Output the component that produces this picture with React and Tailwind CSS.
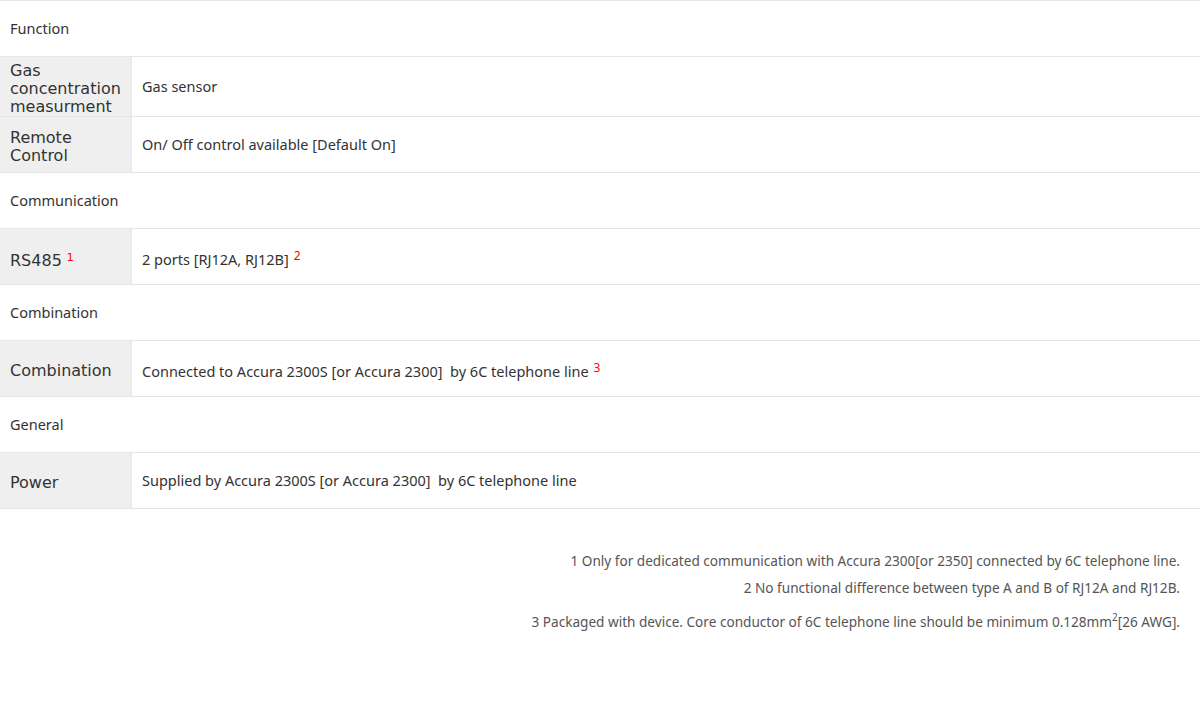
const rows = [
  { section: "Function" },
  { label: "Gas concentration measurment", value: "Gas sensor", h: "h-[60px]" },
  { label: "Remote Control", value: "On/ Off control available [Default On]" },
  { section: "Communication" },
  { label: "RS485", labelNote: "1", value: "2 ports [RJ12A, RJ12B]", note: "2" },
  { section: "Combination" },
  {
    label: "Combination",
    value: "Connected to Accura 2300S [or Accura 2300]  by 6C telephone line",
    note: "3",
  },
  { section: "General" },
  { label: "Power", value: "Supplied by Accura 2300S [or Accura 2300]  by 6C telephone line" },
];

const App = () => {
  return (
    <div className="w-[1200px] h-[705px] bg-white text-[#333]">
      <div className="border-t border-[#e6e6e6]">
        {rows.map((row, i) =>
          row.section ? (
            <div
              key={i}
              className="h-[56px] flex items-center px-[10px] border-b border-[#e6e6e6] text-[14.5px] font-['Noto_Sans',sans-serif]"
            >
              {row.section}
            </div>
          ) : (
            <div key={i} className={`flex border-b border-[#e6e6e6] ${row.h || "h-[56px]"}`}>
              <div
                className={`w-[132px] shrink-0 bg-[#efefef] border-r border-[#e6e6e6] flex items-center px-[10px] text-[16px] leading-[18px] font-['DejaVu_Sans',sans-serif] ${
                  row.labelNote ? "pt-[10px]" : "pt-[4px]"
                }`}
              >
                <span>
                  {row.label}
                  {row.labelNote && (
                    <span className="relative -top-[5px] text-[11px] text-[#f00] ml-[5px]">
                      {row.labelNote}
                    </span>
                  )}
                </span>
              </div>
              <div
                className={`flex items-center pl-[10px] text-[14.5px] font-['Noto_Sans',sans-serif] whitespace-pre ${
                  row.note ? "pt-[6px]" : ""
                }`}
              >
                {row.value}
                {row.note && (
                  <span className="relative -top-[4px] text-[12px] text-[#f00] ml-[5px]">
                    {row.note}
                  </span>
                )}
              </div>
            </div>
          )
        )}
      </div>
      <div className="flex flex-col items-end pr-[20px] pt-[42px] text-[13.6px] text-[#555] font-['Noto_Sans',sans-serif] gap-[7px]">
        <p>1 Only for dedicated communication with Accura 2300[or 2350] connected by 6C telephone line.</p>
        <p>2 No functional difference between type A and B of RJ12A and RJ12B.</p>
        <p className="pt-[6px]">
          3 Packaged with device. Core conductor of 6C telephone line should be minimum 0.128mm
          <span className="relative -top-[6px] text-[10px]">2</span>[26 AWG].
        </p>
      </div>
    </div>
  );
};

export default App;
